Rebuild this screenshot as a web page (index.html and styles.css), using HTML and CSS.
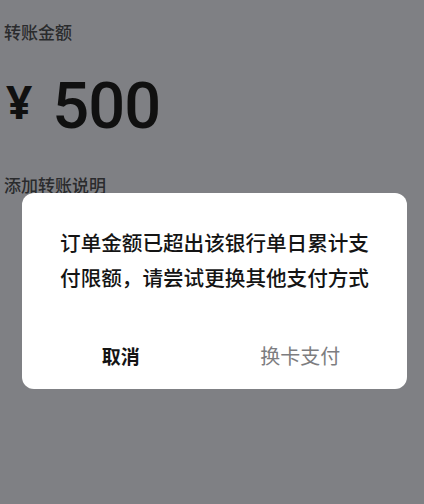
FILE: index.html
```html
<!DOCTYPE html>
<html lang="zh-CN">
<head>
  <meta charset="UTF-8">
  <title>转账</title>
  <link rel="stylesheet" href="styles.css">
</head>
<body>
  <div class="page">
    <div class="label">转账金额</div>
    <div class="amount">
      <span class="currency">¥</span>
      <span class="value">500</span>
    </div>
    <div class="note">添加转账说明</div>
  </div>

  <div class="dialog">
    <p class="message">订单金额已超出该银行单日累计支付限额，请尝试更换其他支付方式</p>
    <div class="actions">
      <button class="btn btn-cancel">取消</button>
      <button class="btn btn-switch">换卡支付</button>
    </div>
  </div>
</body>
</html>
```

FILE: styles.css
```css
body {
  margin: 0;
  width: 424px;
  height: 504px;
  background-color: #7f8084;
  font-family: "Noto Sans CJK SC", "Noto Sans", sans-serif;
  position: relative;
  overflow: hidden;
}
.page {
  padding: 20px 0 0 4px;
}
.label {
  font-size: 17px;
  line-height: 24px;
  font-weight: 500;
  color: #2a2b2d;
}
.amount {
  display: flex;
  align-items: center;
  margin-top: 30px;
  height: 65px;
}
.currency {
  font-family: "Noto Sans", sans-serif;
  font-size: 46px;
  font-weight: 700;
  color: #101010;
  margin: 0 20px 12px 2px;
}
.value {
  font-family: Roboto, sans-serif;
  font-size: 65px;
  line-height: 1;
  font-weight: 500;
  letter-spacing: -1px;
  color: #101010;
}
.note {
  margin-top: 34px;
  font-size: 17px;
  line-height: 24px;
  font-weight: 500;
  color: #2a2b2d;
}
/* modal over the page */
.dialog {
  position: absolute;
  left: 22px;
  top: 193px;
  width: 385px;
  box-sizing: border-box;
  padding: 32px 0 4px;
  background: #fff;
  border-radius: 12px;
}
.message {
  margin: 0 auto;
  width: 310px;
  font-size: 20.6px;
  line-height: 35px;
  font-weight: 500;
  color: #141414;
  text-align: center;
}
.actions {
  display: flex;
  margin-top: 30px;
  padding: 0 12px;
  height: 60px;
}
.btn {
  flex: 1;
  border: none;
  background: none;
  font-family: "Noto Sans CJK SC", sans-serif;
  font-size: 19px;
  padding: 0;
  cursor: pointer;
}
.btn-cancel {
  font-weight: 700;
  color: #141414;
  padding-right: 6px;
}
.btn-switch {
  font-size: 20px;
  color: #7d7d80;
  padding-right: 8px;
}
```
